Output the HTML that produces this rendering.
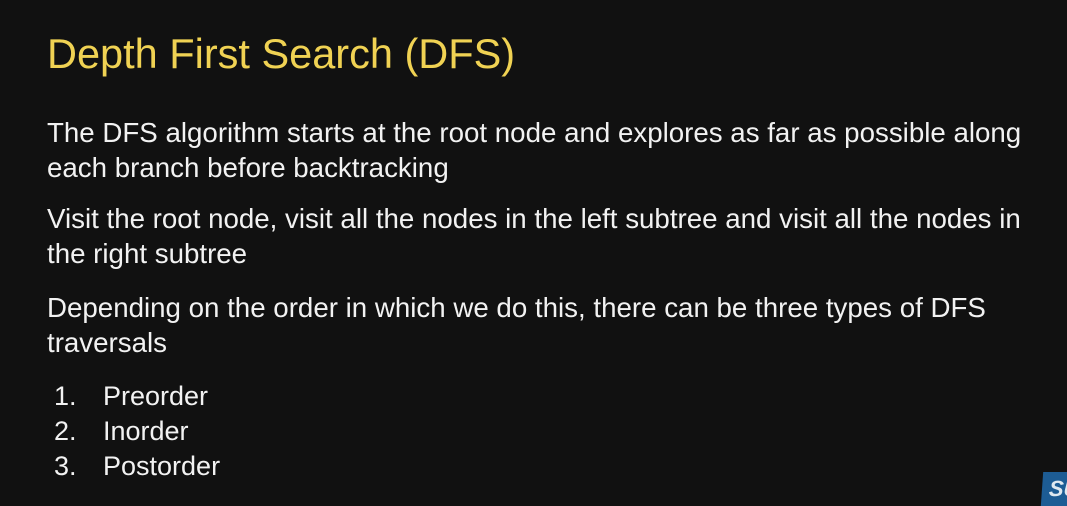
<!DOCTYPE html>
<html><head><style>
html,body{margin:0;padding:0;}
body{width:1067px;height:503px;background:#111111;position:relative;overflow:hidden;font-family:"Liberation Sans",Arial,sans-serif;color:#f2f2f2;}
.t{position:absolute;left:47px;top:30px;font-size:41.5px;color:#f0d253;white-space:nowrap;}
.p{position:absolute;left:47px;font-size:27.7px;line-height:35px;white-space:nowrap;}
.n{position:absolute;left:54px;font-size:27px;line-height:32px;white-space:nowrap;}
.n span{position:absolute;left:49px;top:0;}
.logo{position:absolute;left:1042px;top:472px;width:40px;height:34px;background:#1d5c94;transform:skewX(-4deg);}
.logo b{position:absolute;left:7px;top:4px;color:#dfe8f0;font-size:22px;font-style:italic;font-weight:bold;}
</style></head><body>
<div class="t">Depth First Search (DFS)</div>
<div class="p" style="top:115px">The DFS algorithm starts at the root node and explores as far as possible along<br>each branch before backtracking</div>
<div class="p" style="top:201px">Visit the root node, visit all the nodes in the left subtree and visit all the nodes in<br>the right subtree</div>
<div class="p" style="top:290px">Depending on the order in which we do this, there can be three types of DFS<br>traversals</div>
<div class="n" style="top:380px">1.<span>Preorder</span></div>
<div class="n" style="top:415px">2.<span>Inorder</span></div>
<div class="n" style="top:450px">3.<span>Postorder</span></div>
<div class="logo"><b>SU</b></div>
</body></html>
